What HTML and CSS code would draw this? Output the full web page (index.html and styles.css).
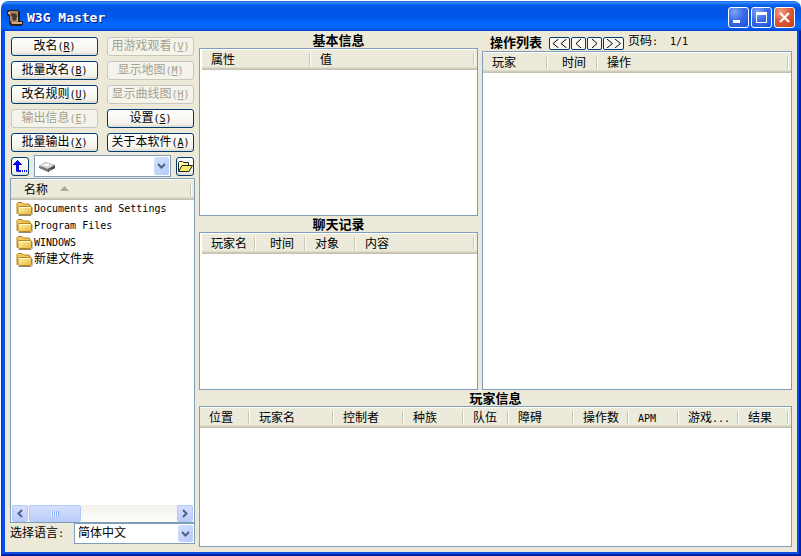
FILE: index.html
```html
<!DOCTYPE html>
<html lang="zh-CN">
<head>
<meta charset="utf-8">
<title>W3G Master</title>
<link rel="stylesheet" href="styles.css">
</head>
<body>
<svg class="defs" width="0" height="0" aria-hidden="true">
  <defs>
    <linearGradient id="gold" x1="0" y1="0" x2="1" y2="1"><stop offset="0" stop-color="#fff6a8"/><stop offset="1" stop-color="#e9b53c"/></linearGradient>
    <symbol id="folder" viewBox="0 0 16 16">
      <path d="M2 14.5h12.500l1-1v-7" fill="none" stroke="#8f8a78" stroke-width="1"/>
      <path d="M.5 12.500v-10l1-1h4l1.500 1.500h5.500l1 1v8.500z" fill="#f0c65a" stroke="#b58522"/>
      <path d="M2.500 5.500h12l.5.500v6.500l-1 1H2.500l-1-1v-6z" fill="url(#gold)" stroke="#b58522"/>
      <path d="M3 6.500h11" stroke="#fffbd0"/>
    </symbol>
    <symbol id="down" viewBox="0 0 9 6"><path d="M1 1l3.500 3.500L8 1" fill="none" stroke="#4d6185" stroke-width="2"/></symbol>
  </defs>
</svg>
<div class="window">
  <header class="titlebar">
    <svg class="app-icon" width="16" height="16" viewBox="0 0 16 16">
      <path d="M1 0h10l2 2v9h3v4l-3 1H4l-2-2V7L0 5V1z" fill="#2a211b"/>
      <path d="M2 1h9v11H5L3 11V5H2z" fill="#a98463"/>
      <path d="M4 4l2-1 3 1 1 2-1 4-2 1-2-2 1-2-2-1z" fill="#45382f"/>
      <path d="M4 12h11v2H5z" fill="#d3aa80"/>
      <path d="M1 2h2v2H1zM10 7h1v4h-1z" fill="#d8b593"/>
    </svg>
    <h1>W3G Master</h1>
    <div class="caption">
      <button type="button" aria-label="最小化"><svg viewBox="0 0 21 21"><path d="M5 13h7v3H5z" fill="#fff"/></svg></button>
      <button type="button" aria-label="最大化"><svg viewBox="0 0 21 21"><path d="M5 5h11v11H5zM6 8v7h9V8z" fill="#fff" fill-rule="evenodd"/></svg></button>
      <button type="button" class="close" aria-label="关闭"><svg viewBox="0 0 21 21"><path d="M6 6l9 9M15 6l-9 9" stroke="#fff" stroke-width="2.200" fill="none"/></svg></button>
    </div>
  </header>
  <div class="frame">
  <main class="client">
    <aside class="side">
      <div class="commands">
        <button type="button">改名<span class="en">(<u>R</u>)</span></button>
        <button type="button" disabled>用游戏观看<span class="en">(<u>V</u>)</span></button>
        <button type="button">批量改名<span class="en">(<u>B</u>)</span></button>
        <button type="button" disabled>显示地图<span class="en">(<u>M</u>)</span></button>
        <button type="button">改名规则<span class="en">(<u>U</u>)</span></button>
        <button type="button" disabled>显示曲线图<span class="en">(<u>H</u>)</span></button>
        <button type="button" disabled>输出信息<span class="en">(<u>E</u>)</span></button>
        <button type="button">设置<span class="en">(<u>S</u>)</span></button>
        <button type="button">批量输出<span class="en">(<u>X</u>)</span></button>
        <button type="button">关于本软件<span class="en">(<u>A</u>)</span></button>
      </div>
      <div class="drive">
        <button type="button" class="tool" aria-label="向上"><svg width="14" height="14" viewBox="0 0 14 14"><path d="M0 5h1V4h1V3h1V2h1V1h1v1h1v1h1v1h1v1h1v1H6v5h2v2H4L3 12V6H0zM9 11h1v2H9zM11 11h1v2h-1zM13 11h1v2h-1z" fill="#0404e8"/></svg></button>
        <div class="combo">
          <svg class="disk" width="16" height="10" viewBox="0 0 16 10"><path d="M0 4l6-4 10 3v3l-7 4-9-4z" fill="#777"/><path d="M0 3.500L6 0l10 3-7 4z" fill="#d5d5d5"/><path d="M4 3l3-1.500 4 1.500-3 1.500z" fill="#fafafa"/><path d="M9 7l7-4v3l-7 4z" fill="#4e4e4e"/><path d="M10 8h2" stroke="#bbb"/></svg>
          <select aria-label="驱动器"><option label=" "></option></select>
          <span class="arrow"><svg width="9" height="6"><use href="#down"/></svg></span>
        </div>
        <button type="button" class="tool" aria-label="打开"><svg width="16" height="14" viewBox="0 0 16 14"><path d="M1.500 12V3.500l1-1h3l1 1h5v3" fill="#fffb9c" stroke="#222"/><path d="M1.500 12.500l3.500-6h10.500l-3.500 6z" fill="#f3ea6a" stroke="#222"/></svg></button>
      </div>
      <div class="pane files">
        <table>
          <thead><tr><th>名称<svg class="sort" width="9" height="5" viewBox="0 0 9 5"><path d="M0 5l4.500-5L9 5z" fill="#aca899"/></svg></th><td class="rest"></td></tr></thead>
          <tbody>
            <tr><td colspan="2"><svg width="17" height="16"><use href="#folder"/></svg><span class="en">Documents and Settings</span></td></tr>
            <tr><td colspan="2"><svg width="17" height="16"><use href="#folder"/></svg><span class="en">Program Files</span></td></tr>
            <tr><td colspan="2"><svg width="17" height="16"><use href="#folder"/></svg><span class="en">WINDOWS</span></td></tr>
            <tr><td colspan="2"><svg width="17" height="16"><use href="#folder"/></svg>新建文件夹</td></tr>
          </tbody>
        </table>
        <div class="scroll">
          <button type="button" aria-label="向左滚动"><svg width="6" height="9" viewBox="0 0 6 9"><path d="M5 1L1.500 4.500 5 8" fill="none" stroke="#4d6185" stroke-width="2"/></svg></button>
          <div class="thumb"><i></i></div>
          <button type="button" aria-label="向右滚动"><svg width="6" height="9" viewBox="0 0 6 9"><path d="M1 1l3.500 3.500L1 8" fill="none" stroke="#4d6185" stroke-width="2"/></svg></button>
        </div>
      </div>
      <div class="language">
        <label for="lang">选择语言<span class="en">:</span></label>
        <div class="combo">
          <select id="lang"><option>简体中文</option></select>
          <span class="arrow"><svg width="9" height="6"><use href="#down"/></svg></span>
        </div>
      </div>
    </aside>
    <section class="content">
      <div class="upper">
        <div class="stack">
          <h2>基本信息</h2>
          <div class="pane basic">
            <table><colgroup><col class="w110"><col><col class="end"></colgroup>
              <thead><tr><th>属性</th><th>值</th><td></td></tr></thead></table>
          </div>
          <h2>聊天记录</h2>
          <div class="pane chat">
            <table><colgroup><col class="w55"><col class="w50"><col class="w50"><col><col class="end"></colgroup>
              <thead><tr><th>玩家名</th><th class="time">时间</th><th>对象</th><th>内容</th><td></td></tr></thead></table>
          </div>
        </div>
        <div class="stack">
          <div class="pager">
            <h2>操作列表</h2>
            <div class="pages">
              <button type="button" class="wide" aria-label="首页"><svg width="17" height="9" viewBox="0 0 17 9"><path d="M7.500 0L2 4.500 7.500 9M15.500 0L10 4.500 15.500 9"/></svg></button>
              <button type="button" aria-label="上一页"><svg width="9" height="9" viewBox="0 0 9 9"><path d="M7 0L2 4.500 7 9"/></svg></button>
              <button type="button" aria-label="下一页"><svg width="9" height="9" viewBox="0 0 9 9"><path d="M2 0l5 4.500L2 9"/></svg></button>
              <button type="button" class="wide" aria-label="末页"><svg width="17" height="9" viewBox="0 0 17 9"><path d="M2 0l5.500 4.500L2 9M10 0l5.500 4.500L10 9"/></svg></button>
            </div>
            <span>页码<span class="en">:</span></span>
            <span class="en count">1/1</span>
          </div>
          <div class="pane actions">
            <table><colgroup><col class="w65"><col class="w50"><col><col class="end"></colgroup>
              <thead><tr><th>玩家</th><th class="time">时间</th><th>操作</th><td></td></tr></thead></table>
          </div>
        </div>
      </div>
      <h2>玩家信息</h2>
      <div class="pane players">
        <table><colgroup><col class="w50"><col class="w84"><col class="w70"><col class="w60"><col class="w45"><col class="w65"><col class="w55"><col class="w50"><col class="w60"><col><col class="end"></colgroup>
          <thead><tr><th>位置</th><th>玩家名</th><th>控制者</th><th>种族</th><th>队伍</th><th>障碍</th><th>操作数</th><th><span class="en">APM</span></th><th>游戏<span class="en">...</span></th><th>结果</th><td></td></tr></thead></table>
      </div>
    </section>
  </main>
  </div>
</div>
</body>
</html>
```
FILE: styles.css
```css
* { box-sizing: border-box; }
body {
  margin: 0;
  background: #fff;
  color: #000;
  font: 12px/16px "Liberation Mono", "Noto Sans CJK SC", monospace;
}
button, select { font: inherit; color: inherit; margin: 0; padding: 0; }
svg { display: block; flex: none; }
.defs { position: absolute; }
.en { font: 10px/16px "DejaVu Sans Mono", monospace; white-space: pre; }
u { text-underline-offset: 1px; }

.window {
  display: flex;
  flex-direction: column;
  min-height: 100vh;
  padding: 1px 0 0 1px;
}
.titlebar {
  flex: none;
  display: flex;
  align-items: center;
  gap: 4px;
  height: 30px;
  padding: 3px 6px 0 6px;
  border-radius: 7px 7px 0 0;
  background: linear-gradient(#0a4fd0 0, #3b92ff 1px, #2a83f8 2px, #0560e8 4px, #0055e5 8px, #0058ea 16px, #0568ff 23px, #0363fa 27px, #0040cc 30px);
}
h1 {
  flex: 1;
  margin: 0;
  font: bold 13px/16px "DejaVu Sans Mono", monospace;
  color: #fff;
  text-shadow: 1px 1px 0 #0a1883;
}
.caption { display: flex; gap: 2px; }
.caption button {
  width: 21px;
  height: 21px;
  border: 1px solid #fff;
  border-radius: 3px;
  background: radial-gradient(circle at 30% 20%, #7ea6f5, #3a6be8 45%, #1c4fd8);
}
.caption svg { margin: -1px; }
.caption .close { background: radial-gradient(circle at 30% 20%, #f0a088, #e0583a 45%, #c4401e); }

.frame {
  flex: 1;
  display: flex;
  border: solid #001ea0;
  border-width: 0 2px 2px 1px;
  border-left-color: #0831d9;
}
.client {
  flex: 1;
  min-width: 0;
  display: grid;
  grid-template-columns: 185px minmax(0, 1fr);
  gap: 4px;
  padding: 1px 5px 5px;
  border: solid #0b4fe8;
  border-width: 0 2px 2px 3px;
  background: #ece9d8;
}
.side { display: flex; flex-direction: column; padding-top: 5px; }
.commands {
  display: grid;
  grid-template-columns: 1fr 1fr;
  gap: 5px 9px;
  padding: 0 1px;
}
.commands button, .tool {
  display: flex;
  align-items: center;
  justify-content: center;
  height: 19px;
  border: 1px solid #003c74;
  border-radius: 3px;
  background: linear-gradient(#fff, #f4f3ee 80%, #dcd8cc);
  white-space: nowrap;
}
.commands button:disabled {
  border-color: #c9c7ba;
  background: #f5f4ea;
  color: #a1a192;
}
.drive { display: flex; align-items: center; gap: 5px; padding: 3px 1px 1px; }
.tool { width: 18px; }
.combo {
  position: relative;
  flex: 1;
  height: 22px;
  border: 1px solid #7f9db9;
  background: #fff;
}
.combo select {
  display: block;
  appearance: none;
  width: 100%;
  height: 100%;
  padding-left: 3px;
  border: 0;
  border-radius: 0;
  background: none;
}
.disk { position: absolute; left: 4px; top: 6px; }
.arrow {
  position: absolute;
  top: 1px;
  right: 1px;
  bottom: 1px;
  width: 15px;
  display: flex;
  align-items: center;
  justify-content: center;
  border-radius: 2px;
  background: linear-gradient(135deg, #d6e2fe, #b5c9f8);
  pointer-events: none;
}
.pane { border: 1px solid #7f9db9; background: #fff; }
table { width: 100%; border-collapse: collapse; table-layout: fixed; }
.stack:first-child table { border-left: 2px solid #fff; }
thead tr {
  height: 21px;
  background: linear-gradient(#fff 0 1px, #ebeadb 1px 18px, #dedbcb 18px 19px, #d1cdbd 19px 20px, #c5c1b1 20px);
}
th {
  padding: 2px 0 0 9px;
  font-weight: normal;
  text-align: left;
  white-space: nowrap;
  background: linear-gradient(#c7c5b2, #c7c5b2) right 1px top 4px / 1px 13px no-repeat, linear-gradient(#fff, #fff) right 0 top 4px / 1px 13px no-repeat;
}
th.time { text-align: right; padding: 2px 12px 0 0; }
td { padding: 0; }
.end { width: 2px; }
.w45 { width: 45px; }
.w50 { width: 50px; }
.w55 { width: 55px; }
.w60 { width: 60px; }
.w65 { width: 65px; }
.w70 { width: 70px; }
.w84 { width: 84px; }
.w110 { width: 110px; }

.files { flex: 1; display: flex; flex-direction: column; }
.files th { padding-left: 13px; }
.files .rest { width: 2px; }
.sort { display: inline-block; margin: 0 0 3px 12px; }
.files tbody td { height: 17px; padding-left: 5px; }
.files tbody svg { float: left; margin-right: 1px; }
.scroll {
  display: flex;
  height: 17px;
  margin: auto 1px 0;
  background: linear-gradient(#f1f0ea, #fefefb);
}
.scroll button, .thumb {
  display: flex;
  align-items: center;
  justify-content: center;
  width: 16px;
  border: 1px solid #b4c8f6;
  border-radius: 2px;
  background: linear-gradient(#d4e0fe, #bacbf9);
}
.scroll button:last-child { margin-left: auto; }
.thumb { width: 52px; margin-left: 1px; }
.thumb i { width: 8px; height: 6px; background: repeating-linear-gradient(90deg, #eef4fe 0 1px, #8cb0f8 1px 2px); }
.language { display: flex; align-items: center; padding-bottom: 3px; }
.language label { width: 64px; white-space: nowrap; }
.language .combo { height: 21px; }

.content { display: flex; flex-direction: column; min-width: 0; }
h2 { margin: 0; padding-top: 3px; font-size: 13px; line-height: 13px; text-align: center; }
.upper {
  flex: 358 0 0;
  display: grid;
  grid-template-columns: minmax(0, 279fr) minmax(0, 310fr);
  gap: 4px;
}
.stack { display: flex; flex-direction: column; }
.basic { flex: 166 0 0; }
.chat { flex: 156 0 0; }
.actions { flex: 1; }
.players { flex: 139 0 0; }
.pager { display: flex; align-items: center; height: 19px; padding-left: 8px; }
.pages { display: flex; gap: 1px; margin: 3px 4px 0 7px; }
.pages button {
  display: flex;
  align-items: center;
  justify-content: center;
  width: 15px;
  height: 13px;
  border: 1px solid #003c74;
  border-radius: 2px;
  background: #f8f7f2;
}
.pages .wide { width: 21px; }
.pages path { fill: none; stroke: #000; stroke-width: 1; }
.count { margin-left: 12px; }
```
